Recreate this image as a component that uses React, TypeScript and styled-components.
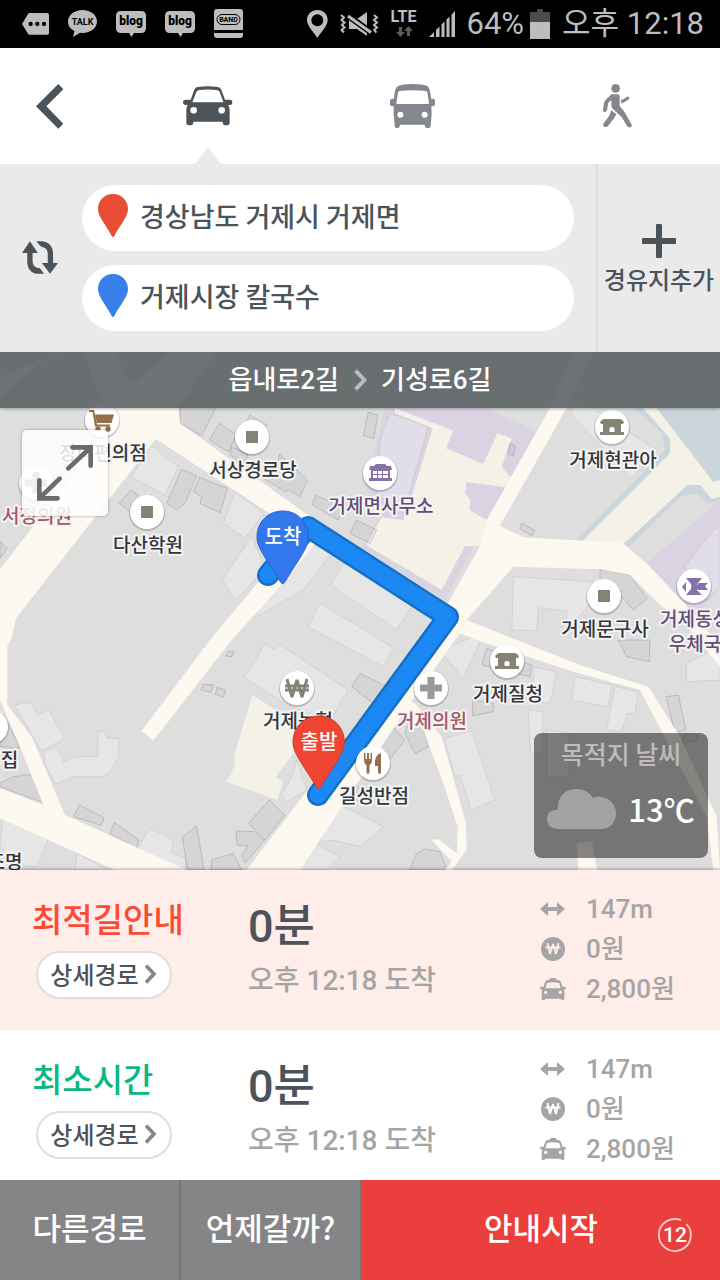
import React from "react";
import styled, { createGlobalStyle } from "styled-components";

const ink = "#4c5359";
const muted = "#a5a5a5";
const korean = `"Noto Sans CJK KR", sans-serif`;
const mixed = `Roboto, ${korean}`;

const GlobalStyle = createGlobalStyle`
  * { box-sizing: border-box; }
  body { margin: 0; background: #fff; font-family: ${mixed}; color: ${ink}; }
  button { margin: 0; padding: 0; border: 0; background: none; font: inherit; color: inherit; cursor: pointer; }
`;

const Page = styled.div`
  display: flex;
  flex-direction: column;
  min-height: 100vh;
`;

/* ---------- status bar ---------- */

const StatusBar = styled.header`
  display: flex;
  justify-content: space-between;
  align-items: center;
  height: 48px;
  padding: 0 16px 0 22px;
  background: #000;
  color: #bdbdbd;
`;

const StatusGroup = styled.div<{ $gap: number }>`
  display: flex;
  align-items: center;
  gap: ${(p) => p.$gap}px;
`;

const StatusText = styled.span`
  font-size: 31px;
  line-height: 48px;
  font-weight: 400;
  white-space: nowrap;
`;

const Svg = styled.svg`
  display: block;
  flex: none;
  overflow: visible;
`;

const TagIcon = () => (
  <Svg width="27" height="22" viewBox="0 0 81 66">
    <path d="M20 0H76Q81 0 81 5V60Q81 65 76 65H20L0 33Z" fill="#bdbdbd" />
    <g fill="#000">
      <circle cx="26" cy="33" r="6.500" />
      <circle cx="46" cy="33" r="6.500" />
      <circle cx="66" cy="33" r="6.500" />
    </g>
  </Svg>
);

const TalkIcon = () => (
  <Svg width="29" height="28" viewBox="0 0 29 28">
    <path d="M14.500 0C6.500 0 0 5 0 11.500C0 16 2.500 19 6.500 21L5 27L12 22.800L14.500 23C22.500 23 29 18 29 11.500S22.500 0 14.500 0Z" fill="#bdbdbd" />
    <text x="14.500" y="15" textAnchor="middle" fontFamily="Roboto, sans-serif" fontSize="9" fontWeight="700" fill="#000">TALK</text>
  </Svg>
);

const BlogIcon = () => (
  <Svg width="30" height="26" viewBox="0 0 30 26">
    <path d="M5 0H25Q30 0 30 5V17Q30 22 25 22H18L15.500 26L13 22H5Q0 22 0 17V5Q0 0 5 0Z" fill="#bdbdbd" />
    <text x="15" y="14" textAnchor="middle" fontFamily="Roboto, sans-serif" fontSize="12" fontWeight="900" fill="#000">blog</text>
  </Svg>
);

const BandIcon = () => (
  <Svg width="29" height="30" viewBox="0 0 29 30">
    <path d="M3 0H26Q29 0 29 3V21H0V3Q0 0 3 0ZM0 24H29V26Q29 29 26 29H3Q0 29 0 26Z" fill="#bdbdbd" />
    <rect x="3" y="5.500" width="23" height="10" rx="5" fill="none" stroke="#000" />
    <text x="14.500" y="13" textAnchor="middle" fontFamily="Roboto, sans-serif" fontSize="7" fontWeight="700" fill="#000">BAND</text>
  </Svg>
);

const GpsIcon = () => (
  <Svg width="21" height="28" viewBox="0 0 63 84">
    <path fillRule="evenodd" d="M31 0C49 0 62 13 62 30C62 48 42 66 31 84C20 66 0 48 0 30C0 13 14 0 31 0ZM31 13A18 18 0 1 0 31 49A18 18 0 1 0 31 13Z" fill="#bdbdbd" />
  </Svg>
);

const MuteIcon = () => (
  <Svg width="38" height="26" viewBox="0 0 38 26" fill="none" stroke="#bdbdbd">
    <path d="M1 4L4 6.500L1.500 9L4.500 11.500L2 14L4.500 16.500L1.500 19L4 21.500" strokeWidth="2" />
    <path d="M34 4L37 6.500L34 9L37 11.500L34 14L37 16.500L34 19L36.500 21.500" strokeWidth="2" />
    <path d="M9 8H17L27 1V25L17 18H9Z" fill="#bdbdbd" stroke="none" />
    <path d="M7 4L32 22" stroke="#000" strokeWidth="6" />
    <path d="M8 5L31 21.500" strokeWidth="3" />
  </Svg>
);

const LteIcon = () => (
  <Svg width="27" height="28" viewBox="0 0 27 28">
    <text x="13.500" y="12" textAnchor="middle" fontFamily="Roboto, sans-serif" fontSize="16" fontWeight="700" fill="#bdbdbd">LTE</text>
    <path d="M9 17H12V22H15L10.500 27L6 22H9ZM17 26H20V21H23L18.500 16L14 21H17Z" fill="#5c5c5c" />
  </Svg>
);

const SignalIcon = () => (
  <Svg width="26" height="26" viewBox="0 0 26 26">
    <path d="M0 26L5 21V26ZM7 26V19L10.500 15.500V26ZM12.500 26V13.500L15.500 10.500V26ZM17.500 26V8.500L20.500 5.500V26ZM22.500 26V3.500L26 0V26Z" fill="#bdbdbd" />
  </Svg>
);

const BatteryIcon = () => (
  <Svg width="20" height="30" viewBox="0 0 20 30">
    <path d="M7 0H13V3H20V13H0V3H7Z" fill="#4b4b4b" />
    <path d="M0 13H20V30H0Z" fill="#bdbdbd" />
  </Svg>
);

/* ---------- transport tabs ---------- */

const TabBar = styled.nav`
  display: grid;
  grid-template-columns: 106px 1fr 1fr 1fr;
  height: 116px;
  background: #fff;
`;

const TabButton = styled.button<{ $active?: boolean }>`
  position: relative;
  display: flex;
  align-items: center;
  justify-content: center;
  color: ${(p) => (p.$active ? ink : "#84888e")};
  ${(p) =>
    p.$active &&
    `&::after {
      content: "";
      position: absolute;
      left: 50%;
      bottom: 0;
      margin-left: -13px;
      border: 13px solid transparent;
      border-top: 0;
      border-bottom: 17px solid #eaeaea;
    }`}
`;

const BackButton = styled(TabButton)`
  justify-content: flex-start;
  padding-left: 36px;
  color: ${ink};
`;

const CarIcon = () => (
  <Svg width="50" height="40" viewBox="0 0 150 120" fill="currentColor">
    <path
      fillRule="evenodd"
      d="M23 41L34 11Q37 4 44 3Q75 -1 104 3Q112 4 115 11L126 41H141Q148 41 148 49Q148 57 141 57H135Q140 62 140 72V110Q140 118 130 118Q120 118 119 110V107H31V110Q30 118 20 118Q10 118 10 110V72Q10 62 14 57H8Q0 57 0 49Q0 41 8 41ZM28 49H121L110 18Q108 13 101 12Q75 9 49 12Q42 13 40 18ZM22 73a10 10 0 1 0 20 0a10 10 0 1 0 -20 0ZM106 73a10 10 0 1 0 20 0a10 10 0 1 0 -20 0Z"
    />
  </Svg>
);

const BusIcon = () => (
  <Svg width="45" height="44" viewBox="0 0 135 132" fill="currentColor">
    <path
      fillRule="evenodd"
      d="M12 44Q13 12 24 6Q36 0 67 0Q100 0 112 6Q121 12 123 44H128Q135 44 135 51V61Q135 67 124 67L125 90L122 125Q122 132 113 132Q105 132 104 122H30Q29 132 22 132Q14 132 14 125L11 90V67Q0 67 0 61V51Q0 44 7 44ZM19 60H117L112 25Q110 20 102 20Q67 17 34 20Q26 20 24 25ZM22 92a9 9 0 1 0 18 0a9 9 0 1 0 -18 0ZM95 92a9 9 0 1 0 18 0a9 9 0 1 0 -18 0Z"
    />
  </Svg>
);

const WalkIcon = () => (
  <Svg width="29" height="44" viewBox="0 0 87 132" fill="currentColor">
    <circle cx="38" cy="13" r="13" />
    <path d="M25 31H44Q50 31 50 38V64Q51 70 58 76Q64 82 68 90L85 120Q89 127 82 130Q76 131 72 126L56 99L33 78Q25 71 25 62V48L16 56L12 79Q9 86 3 84Q-1 82 0 76L4 54Q6 50 10 46Z" />
    <path d="M25 79L40 91L34 101L15 126Q10 131 3 128Q-2 124 2 118L19 95Z" />
    <path d="M60 52L75 42" stroke="currentColor" strokeWidth="9" strokeLinecap="round" />
    <path d="M56 46V58" stroke="currentColor" strokeWidth="3" />
  </Svg>
);

/* ---------- origin and destination ---------- */

const SearchPanel = styled.section`
  display: grid;
  grid-template-columns: 82px 1fr 124px;
  background: #eaeaea;
`;

const SwapButton = styled.button`
  display: flex;
  align-items: center;
  justify-content: center;
  padding: 0 2px 2px 0;
`;

const Fields = styled.div`
  display: flex;
  flex-direction: column;
  gap: 14px;
  padding: 21px 22px 21px 0;
`;

const Field = styled.label`
  display: flex;
  align-items: center;
  gap: 12px;
  height: 66px;
  padding: 0 24px 4px 16px;
  border-radius: 33px;
  background: #fff;
`;

const FieldInput = styled.input`
  flex: 1;
  min-width: 0;
  height: 44px;
  padding: 0;
  border: 0;
  outline: 0;
  background: transparent;
  font: 500 27px/44px ${korean};
  color: ${ink};
`;

const AddButton = styled.button`
  display: flex;
  flex-direction: column;
  align-items: center;
  justify-content: center;
  gap: 3px;
  padding-top: 5px;
  border-left: 2px solid #dedede;
  font: 500 24px/36px ${korean};
  white-space: nowrap;
`;

const pinPath = "M45 0C70 0 90 19 90 45C90 70 62 98 49 126Q45 132 41 126C28 98 0 70 0 45C0 19 20 0 45 0Z";

const FieldPin = ({ color }: { color: string }) => (
  <Svg width="30" height="44" viewBox="0 0 90 132">
    <path d={pinPath} fill={color} />
  </Svg>
);

/* ---------- map ---------- */

const MapArea = styled.main`
  position: relative;
  flex: 1;
  min-height: 480px;
  overflow: hidden;
  background: #dedede;
`;

const MapCanvas = styled.svg`
  position: absolute;
  inset: 0;
  width: 100%;
  height: 100%;
`;

const RouteBar = styled.div`
  position: relative;
  display: flex;
  align-items: center;
  justify-content: center;
  gap: 14px;
  height: 56px;
  background: rgba(89, 95, 98, 0.88);
  box-shadow: 0 1px 3px rgba(0, 0, 0, 0.3);
  color: #fff;
  font: 500 26px/56px ${mixed};
`;

const ExpandButton = styled.button`
  position: absolute;
  left: 22px;
  top: 78px;
  display: flex;
  align-items: center;
  justify-content: center;
  width: 86px;
  height: 86px;
  border-radius: 5px;
  background: rgba(255, 255, 255, 0.84);
  box-shadow: 0 0 3px rgba(0, 0, 0, 0.35);
`;

const WeatherCard = styled.aside`
  position: absolute;
  right: 12px;
  bottom: 12px;
  width: 174px;
  height: 125px;
  border-radius: 8px;
  background: rgba(0, 0, 0, 0.47);
  text-align: center;
`;

const WeatherTitle = styled.div`
  font: 500 25px/40px ${korean};
  color: #bcbcbc;
`;

const WeatherNow = styled.div`
  display: flex;
  align-items: center;
  justify-content: center;
  gap: 12px;
  height: 72px;
  color: #fff;
  font: 500 31px/70px ${korean};
`;

type Tile = { x: number; y: number; shapes: string[] };

const Terrain = ({ tiles, fill, stroke }: { tiles: Tile[]; fill: string; stroke?: string }) => (
  <>
    {tiles.map((t, i) => (
      <g key={i} transform={`translate(${t.x} ${t.y})`} fill={fill} stroke={stroke} strokeWidth="3">
        {t.shapes.map((s) => (
          <polygon key={s} points={s} />
        ))}
      </g>
    ))}
  </>
);

const campus: Tile[] = [
  {
    x: 1080,
    y: 144,
    shapes: [
      "105,-100 180,-144 330,0 530,95 255,600 0,440 18,425 60,345 20,270 75,24",
      "1080,300 860,490 960,590 1010,650 1080,560",
    ],
  },
];

const yards: Tile[] = [
  {
    x: 1080,
    y: 144,
    shapes: [
      "105,24 280,92 258,145 370,192 412,100 455,115 425,200 455,235 437,262 320,246 315,280 332,300 328,330 380,360 360,438 315,438 245,570 18,435 65,352 130,360 155,290 218,85 105,40",
      "800,-30 850,24 890,24 1060,245 1080,240 1080,290 1050,310 1015,255 980,255 795,432 655,424 925,160 925,115",
    ],
  },
  {
    x: 0,
    y: 864,
    shapes: ["757,165 890,250 880,340 828,410 850,425 832,480 678,425 706,375 703,345"],
  },
];

const water: Tile[] = [
  {
    x: 1080,
    y: 144,
    shapes: [
      "850,-40 890,24 1060,245 1080,240 1080,-144 800,-144",
      "820,24 905,100 915,150 650,420 668,422 930,160 930,115 848,24 780,-60 760,-60",
      "790,432 985,255 1020,255 1055,297 1080,290 1080,300 1045,312 1010,280 960,290 808,440",
    ],
  },
];

const roads: Tile[] = [
  {
    x: 0,
    y: 144,
    shapes: [
      "250,-144 350,-144 383,-56 410,-56 500,-144 650,-144 535,25 540,70 930,350 900,400 468,117 48,655 33,720 0,720 0,508 330,80",
      "0,-70 190,-144 160,-144 0,-5",
      "930,350 780,540 630,720 425,993 460,1022 695,720 850,550 985,380",
    ],
  },
  {
    x: 1080,
    y: 144,
    shapes: [
      "570,24 640,-144 700,-144 620,24 420,377 490,412 790,430 865,495 1000,640 1080,740 1080,800 990,690 895,610 810,525 720,508 460,500 320,660 470,720 660,795 865,860 960,1010 1070,1250 1080,1410 1060,1410 1040,1250 840,870 640,815 350,720 300,700 150,910 -180,1410 -340,1410 -20,990 200,700 235,660 360,438 380,360",
      "130,890 165,910 245,1010 318,1270 320,1350 275,1410 255,1410 275,1385 215,1320 235,1317 290,1360 293,1280 250,1150 190,990 130,930",
      "650,1330 695,1323 712,1410 655,1410",
    ],
  },
  {
    x: 0,
    y: 864,
    shapes: [
      "0,0 32,0 22,18 22,195 95,290 195,525 560,690 345,690 0,535 0,445 130,495 60,320 0,180",
    ],
  },
];

const paleBlocks: Tile[] = [
  {
    x: 0,
    y: 144,
    shapes: [
      "455,138 535,200 495,285 395,230",
      "705,275 790,340 735,415 670,370",
      "755,410 780,470 790,510 708,600 667,540",
      "925,430 995,458 910,570 778,645 765,640 860,540",
      "1030,490 1080,510 1180,565 1240,610 1190,690 993,555",
      "960,610 1110,700 1180,745 1150,800 925,680",
    ],
  },
  {
    x: 1080,
    y: 144,
    shapes: [
      "630,40 660,0 890,150 815,235",
      "460,530 695,545 700,600 620,690 620,632 535,623 530,692 456,690",
      "90,40 205,80 130,340 50,280 60,120",
      "240,750 370,700 310,835",
      "520,800 590,815 570,910 520,900",
      "645,830 755,855 745,920 635,900",
      "765,860 835,875 825,940 800,940 785,995 740,990",
      "505,930 548,935 548,1060 512,1060",
      "560,990 628,1000 628,1130 560,1130",
      "253,1015 335,993 405,1200 333,1230 300,1125 285,1130",
      "980,790 1080,740 1080,840 980,845",
      "975,500 1060,390 1080,380 1080,560 1040,600",
    ],
  },
  {
    x: 0,
    y: 864,
    shapes: [
      "43,195 92,187 112,225 147,210 193,295 125,332",
      "133,335 170,320 190,365 225,350 293,350 295,273 318,278 320,295 356,295 355,350 330,395 305,410 220,410 165,432 135,370",
      "795,12 825,30 838,12 1045,150 990,240 870,200 733,112",
      "10,535 145,598 110,680 30,670 0,610",
      "450,565 520,600 515,640 557,655 555,690 410,630",
      "232,640 320,690 225,690",
      "890,360 920,450 860,485 845,465 880,400",
      "1010,490 1150,560 1080,620 1000,600 970,605 925,570",
      "900,590 1020,650 980,690 830,690 895,615",
    ],
  },
];

const greyBlocks: Tile[] = [
  {
    x: 0,
    y: 144,
    shapes: [
      "540,0 570,-40 650,20 605,107 540,70",
      "658,70 710,105 685,155 628,120",
      "750,45 800,75 790,140 730,150 710,120",
      "695,140 745,165 730,190 690,165",
      "838,162 923,240 900,290 868,270 855,275 790,235 830,220",
      "545,208 590,228 555,310 530,330 500,310",
      "598,232 683,265 660,338 600,310 605,290 580,275",
      "392,270 415,285 400,345 358,310",
      "948,285 1030,325 1015,360 937,315",
      "1070,360 1130,390 1110,430 1050,400",
      "0,425 22,445 0,475",
      "225,-135 270,-140 300,-80 270,-65",
    ],
  },
  {
    x: 1080,
    y: 144,
    shapes: [
      "25,37 53,45 42,115 10,107",
      "485,370 524,390 517,407 480,387",
      "450,130 467,140 460,168 443,160",
      "720,508 808,525 862,595 820,630 785,590 720,570",
      "775,720 870,720 868,785 800,770",
      "380,745 515,795 510,830 365,795",
      "338,900 400,910 400,935 338,947",
      "918,890 955,885 978,990 945,998",
      "975,1000 1012,1005 1015,1020 965,1030",
      "0,820 80,860 40,910 -25,860",
      "90,970 135,1020 80,1090 40,1060",
      "140,980 185,970 205,1040 165,1060 135,1000",
      "195,1347 240,1355 258,1400 250,1410 148,1410 170,1360",
    ],
  },
  {
    x: 0,
    y: 864,
    shapes: [
      "25,250 60,325 0,320 0,250",
      "0,430 40,410 97,403 130,488 0,440",
      "238,495 312,533 303,557 280,548 220,530",
      "343,548 417,600 408,625 330,580",
      "590,558 612,690 563,690 547,590",
      "634,660 700,640 725,690 634,690",
      "808,480 855,525 795,600 745,550",
      "708,573 765,575 793,602 735,670 725,645 745,618 712,615",
      "685,33 702,35 695,50 677,48",
      "610,133 640,135 633,157 603,150",
      "652,142 677,150 670,172 646,163",
      "1040,415 1100,460 1080,485 1010,450",
    ],
  },
];

type Poi = { x: number; y: number; kind: string; lines: string[]; color?: string };

const pois: Poi[] = [
  { x: 102, y: 68, kind: "cart", lines: ["장미편의점"] },
  { x: 36, y: 131, kind: "cross", lines: ["서정의원"], color: "#a85566" },
  { x: 252, y: 85, kind: "square", lines: ["서상경로당"] },
  { x: 147, y: 160, kind: "square", lines: ["다산학원"] },
  { x: 380, y: 121, kind: "office", lines: ["거제면사무소"], color: "#664c75" },
  { x: 612, y: 75, kind: "hall", lines: ["거제현관아"] },
  { x: 604, y: 244, kind: "square", lines: ["거제문구사"] },
  { x: 694, y: 234, kind: "post", lines: ["거제동성", "우체국"], color: "#664c75" },
  { x: 507, y: 309, kind: "hall", lines: ["거제질청"] },
  { x: 297, y: 336, kind: "won", lines: ["거제농협"] },
  { x: 431, y: 336, kind: "cross", lines: ["거제의원"], color: "#a85566" },
  { x: 373, y: 411, kind: "food", lines: ["길성반점"] },
  { x: -9, y: 375, kind: "square", lines: ["한우집"] },
  { x: 4, y: 477, kind: "none", lines: ["조명"] },
];

const PoiGlyph = ({ kind }: { kind: string }) => {
  switch (kind) {
    case "square":
      return <path d="M-6 -6H6V6H-6Z" fill="#848376" />;
    case "cross":
      return <path d="M-3.500 -11H3.500V-3.500H11V3.500H3.500V11H-3.500V3.500H-11V-3.500H-3.500Z" fill="#999" />;
    case "cart":
      return (
        <g fill="#93704a">
          <path d="M-13 -10H-8L-5 4.500H8V6.500H-7L-9.500 -8H-13ZM-7 -5.500H12L9.500 3H-5Z" />
          <circle cx="-4" cy="9" r="2.700" />
          <circle cx="6" cy="9" r="2.700" />
        </g>
      );
    case "office":
      return (
        <path
          fillRule="evenodd"
          d="M-4 -9H5L7 -7H11L12 -3H10V5H12V8H-11V5H-9V-3H-11L-10 -7H-6ZM-7 -2V1H-3V-2ZM-2 -2V1H2V-2ZM3 -2V1H8V-2ZM-7 2V5H-3V2ZM-2 2V5H2V2ZM3 2V5H8V2Z"
          fill="#8771ab"
        />
      );
    case "hall":
      return (
        <path
          fillRule="evenodd"
          d="M-8 -8H8L10 -7L12 -5L11 -3H9V5H12V8H-12V5H-9V-3H-11L-12 -5L-10 -7ZM-2.500 5H2.500V1Q0 -1 -2.500 1Z"
          fill="#848376"
        />
      );
    case "post":
      return (
        <path
          d="M-8 -8H8L3 -2L5 1L3 4L8 9H-8L-3 3Q-2 0 -3 -2ZM-12 1L-8 -4V6ZM4 -3H14L11 0L14 4H4Z"
          fill="#8771ab"
        />
      );
    case "won":
      return (
        <path
          d="M-10 -9L-5 9L0 -8L5 9L10 -9M-12 -2H12M-12 2H12"
          fill="none"
          stroke="#848376"
          strokeWidth="3"
          strokeLinejoin="bevel"
        />
      );
    case "food":
      return (
        <path
          d="M-9 -10H-7.500V-4H-6V-10H-4V-4H-2.500V-10H-1V-3Q-1 1 -3.500 2V8Q-3.500 11 -5 11T-6.500 8V2Q-9 1 -9 -3ZM8 -10V8Q8 11 6.500 11T5 8V3H2Q1 -8 8 -10Z"
          fill="#93704a"
        />
      );
    default:
      return null;
  }
};

const MapLabel = styled.text`
  font: 500 19px ${korean};
  text-anchor: middle;
  paint-order: stroke;
  stroke: #f4f4f4;
  stroke-width: 4px;
  stroke-linejoin: round;
`;

const PinLabel = styled.text`
  font: 500 20px ${korean};
  text-anchor: middle;
  fill: #fff;
`;

const mapPinPath = "M77 0C121 0 154 34 154 78C154 110 128 140 84 212Q77 224 70 212C26 140 0 110 0 78C0 34 33 0 77 0Z";

const MapPin = ({ x, y, fill, edge, label }: { x: number; y: number; fill: string; edge: string; label: string }) => (
  <g transform={`translate(${x} ${y})`}>
    <path d={mapPinPath} transform="translate(-26 0) scale(.3333)" fill={fill} stroke={edge} strokeWidth="3" />
    <PinLabel x="0" y="33">
      {label}
    </PinLabel>
  </g>
);

const routePoints = "268,223 308,175 448,265 318,443";

const MapDrawing = () => (
  <MapCanvas viewBox="0 0 720 518" preserveAspectRatio="xMidYMid slice" role="img" aria-label="지도">
    <g transform="scale(.33333)">
      <Terrain tiles={campus} fill="#d9d3e2" />
      <Terrain tiles={yards} fill="#f4f1e6" />
      <Terrain tiles={water} fill="#cad5dc" />
      <Terrain tiles={paleBlocks} fill="#ffffff40" stroke="#00000012" />
      <Terrain tiles={greyBlocks} fill="#0000000a" stroke="#00000026" />
      <Terrain tiles={roads} fill="#fdf9f0" />
    </g>
    <g fill="none" strokeLinejoin="round" strokeLinecap="round">
      <polyline points={routePoints} stroke="#1570c4" strokeWidth="22" />
      <polyline points={routePoints} stroke="#1b88f4" strokeWidth="17" />
    </g>
    {pois.map((p) => (
      <g key={p.lines[0]} transform={`translate(${p.x} ${p.y})`}>
        {p.kind !== "none" && (
          <>
            <circle cy="1" r="18" fill="#00000030" />
            <circle r="17" fill="#fff" />
          </>
        )}
        <PoiGlyph kind={p.kind} />
        {p.lines.map((line, i) => (
          <MapLabel key={line} x="1" y={40 + i * 25} fill={p.color ?? "#33363a"}>
            {line}
          </MapLabel>
        ))}
      </g>
    ))}
    <MapPin x={283} y={159} fill="#3277ec" edge="#2163cf" label="도착" />
    <MapPin x={319} y={364} fill="#ef4533" edge="#cf3527" label="출발" />
  </MapCanvas>
);

/* ---------- route options ---------- */

const OptionList = styled.ul`
  position: relative;
  margin: 0;
  padding: 0;
  list-style: none;
  box-shadow: 0 -1px 3px rgba(0, 0, 0, 0.3);
`;

const Option = styled.li<{ $selected?: boolean }>`
  display: grid;
  grid-template-columns: 216fr 292fr 180fr;
  padding: 19px 0 ${(p) => (p.$selected ? 21 : 11)}px 32px;
  background: ${(p) => (p.$selected ? "#feede9" : "#fff")};
`;

const OptionName = styled.h2<{ $color: string }>`
  margin: 0;
  font: 500 33px/58px ${korean};
  color: ${(p) => p.$color};
`;

const DetailButton = styled.button`
  display: flex;
  align-items: center;
  justify-content: center;
  gap: 5px;
  width: 136px;
  height: 48px;
  margin: 4px 0 0 4px;
  padding: 0 2px 2px 0;
  border: 2px solid #dedede;
  border-radius: 24px;
  background: #fff;
  font: 500 24px/40px ${korean};
`;

const Duration = styled.div`
  font-size: 45px;
  font-weight: 500;
  line-height: 76px;
`;

const Arrival = styled.div`
  font-size: 28px;
  font-weight: 500;
  line-height: 32px;
  color: ${muted};
`;

const Stats = styled.ul`
  margin: 0;
  padding: 0;
  list-style: none;
`;

const Stat = styled.li`
  display: grid;
  grid-template-columns: 26px 1fr;
  align-items: center;
  gap: 20px;
  height: 40px;
  font-size: 26px;
  font-weight: 500;
  line-height: 40px;
  color: ${muted};
`;

const ChevronIcon = ({ color = "#85888b", width = 12, height = 20 }: { color?: string; width?: number; height?: number }) => (
  <Svg width={width} height={height} viewBox="0 0 12 20">
    <path d="M2 1.500L10 10L2 18.500" fill="none" stroke={color} strokeWidth="3.600" />
  </Svg>
);

const DistanceIcon = () => (
  <Svg width="26" height="14" viewBox="0 0 26 14">
    <path d="M0 7L8 0V5H17V0L25 7L17 14V9H8V14Z" fill="currentColor" />
  </Svg>
);

const WonIcon = ({ mark }: { mark: string }) => (
  <Svg width="26" height="24" viewBox="0 0 26 24">
    <circle cx="13" cy="12" r="12" fill="currentColor" />
    <path
      d="M7.500 6L10 17L13 7L16 17L18.500 6M5.500 10.500H20.500"
      fill="none"
      stroke={mark}
      strokeWidth="1.800"
      strokeLinejoin="bevel"
    />
  </Svg>
);

const TaxiIcon = () => (
  <Svg width="26" height="22" viewBox="0 0 78 66">
    <path
      fillRule="evenodd"
      d="M29 5Q30 0 34 0H45Q49 0 50 5L58 7Q63 9 67 26H74Q78 27 78 31Q78 35 72 35L73 42V62Q73 66 67 66Q62 66 62 62H16Q16 66 10 66Q5 66 5 62V42L6 35Q0 35 0 31Q0 27 4 26H11Q15 9 20 7ZM16 31H62L58 15Q39 10 21 15ZM12 43a5 5 0 1 0 10 0a5 5 0 1 0 -10 0ZM56 43a5 5 0 1 0 10 0a5 5 0 1 0 -10 0Z"
      fill="currentColor"
    />
  </Svg>
);

const options = [
  { name: "최적길안내", color: "#fb4c33", selected: true },
  { name: "최소시간", color: "#09b885", selected: false },
];

/* ---------- footer ---------- */

const Footer = styled.footer`
  display: grid;
  grid-template-columns: 181fr 181fr 358fr;
  height: 100px;
`;

const FooterButton = styled.button<{ $primary?: boolean }>`
  position: relative;
  padding-bottom: 6px;
  border-right: ${(p) => (p.$primary ? "0" : "2px solid #757577")};
  background: ${(p) => (p.$primary ? "#eb3f3d" : "#858587")};
  color: #fff;
  font: 500 31px/46px ${korean};
`;

const Countdown = styled.span`
  position: absolute;
  right: 28px;
  bottom: 28px;
  width: 34px;
  height: 34px;
  font: 500 21px/35px Roboto, sans-serif;
  svg {
    position: absolute;
    inset: 0;
  }
`;

export default function App() {
  return (
    <>
      <GlobalStyle />
      <Page>
        <StatusBar>
          <StatusGroup $gap={19}>
            <TagIcon />
            <TalkIcon />
            <BlogIcon />
            <BlogIcon />
            <BandIcon />
          </StatusGroup>
          <StatusGroup $gap={12}>
            <GpsIcon />
            <MuteIcon />
            <LteIcon />
            <SignalIcon />
            <StatusGroup $gap={6}>
              <StatusText>64%</StatusText>
              <BatteryIcon />
            </StatusGroup>
            <StatusText>오후 12:18</StatusText>
          </StatusGroup>
        </StatusBar>

        <TabBar>
          <BackButton aria-label="뒤로">
            <Svg width="28" height="45" viewBox="0 0 84 135">
              <path d="M0 67L67 0L82 16L31 67L82 119L67 134Z" fill="currentColor" />
            </Svg>
          </BackButton>
          <TabButton $active aria-label="자동차">
            <CarIcon />
          </TabButton>
          <TabButton aria-label="버스">
            <BusIcon />
          </TabButton>
          <TabButton aria-label="도보">
            <WalkIcon />
          </TabButton>
        </TabBar>

        <SearchPanel>
          <SwapButton aria-label="출발지와 도착지 바꾸기">
            <Svg width="36" height="33" viewBox="0 0 109 99">
              <path
                d="M0 36L24 0L48 36H32V62Q33 80 54 82L67 99H50Q17 97 16 62V36ZM109 66L85 99L60 66H78V38Q77 19 58 17L43 0H58Q93 2 94 38V66Z"
                fill={ink}
              />
            </Svg>
          </SwapButton>
          <Fields>
            <Field>
              <FieldPin color="#e84d35" />
              <FieldInput aria-label="출발지" defaultValue="경상남도 거제시 거제면" />
            </Field>
            <Field>
              <FieldPin color="#377fea" />
              <FieldInput aria-label="도착지" defaultValue="거제시장 칼국수" />
            </Field>
          </Fields>
          <AddButton>
            <Svg width="34" height="34" viewBox="0 0 34 34">
              <path d="M14 1Q14 0 15 0H19Q20 0 20 1V14H33Q34 14 34 15V19Q34 20 33 20H20V33Q20 34 19 34H15Q14 34 14 33V20H1Q0 20 0 19V15Q0 14 1 14H14Z" fill={ink} />
            </Svg>
            경유지추가
          </AddButton>
        </SearchPanel>

        <MapArea>
          <MapDrawing />
          <RouteBar>
            <span>읍내로2길</span>
            <ChevronIcon color="#b9bbbc" width={14} height={22} />
            <span>기성로6길</span>
          </RouteBar>
          <ExpandButton aria-label="지도 확대">
            <Svg width="56" height="56" viewBox="0 0 168 168">
              <path
                d="M106 7H161V62M159 9L94 70M62 160H7V106M9 158L68 101"
                fill="none"
                stroke="#6b6b6b"
                strokeWidth="14"
                strokeLinecap="round"
              />
            </Svg>
          </ExpandButton>
          <WeatherCard>
            <WeatherTitle>목적지 날씨</WeatherTitle>
            <WeatherNow>
              <Svg width="69" height="40" viewBox="0 0 207 120">
                <path d="M32 120Q0 118 0 90Q0 62 32 62Q33 0 92 0Q122 2 138 26Q166 18 188 34Q207 50 207 74Q204 116 164 120Z" fill="#a3a3a3" />
              </Svg>
              <span>13℃</span>
            </WeatherNow>
          </WeatherCard>
        </MapArea>

        <OptionList>
          {options.map((o) => (
            <Option key={o.name} $selected={o.selected}>
              <div>
                <OptionName $color={o.color}>{o.name}</OptionName>
                <DetailButton>
                  상세경로
                  <ChevronIcon />
                </DetailButton>
              </div>
              <div>
                <Duration>0분</Duration>
                <Arrival>오후 12:18 도착</Arrival>
              </div>
              <Stats>
                <Stat>
                  <DistanceIcon />
                  147m
                </Stat>
                <Stat>
                  <WonIcon mark={o.selected ? "#feede9" : "#fff"} />
                  0원
                </Stat>
                <Stat>
                  <TaxiIcon />
                  2,800원
                </Stat>
              </Stats>
            </Option>
          ))}
        </OptionList>

        <Footer>
          <FooterButton>다른경로</FooterButton>
          <FooterButton>언제갈까?</FooterButton>
          <FooterButton $primary>
            안내시작
            <Countdown>
              <Svg width="34" height="34" viewBox="0 0 34 34">
                <path d="M23 2.200A16 16 0 1 0 28.500 6" fill="none" stroke="#fbd0cf" strokeWidth="1.800" />
              </Svg>
              12
            </Countdown>
          </FooterButton>
        </Footer>
      </Page>
    </>
  );
}
